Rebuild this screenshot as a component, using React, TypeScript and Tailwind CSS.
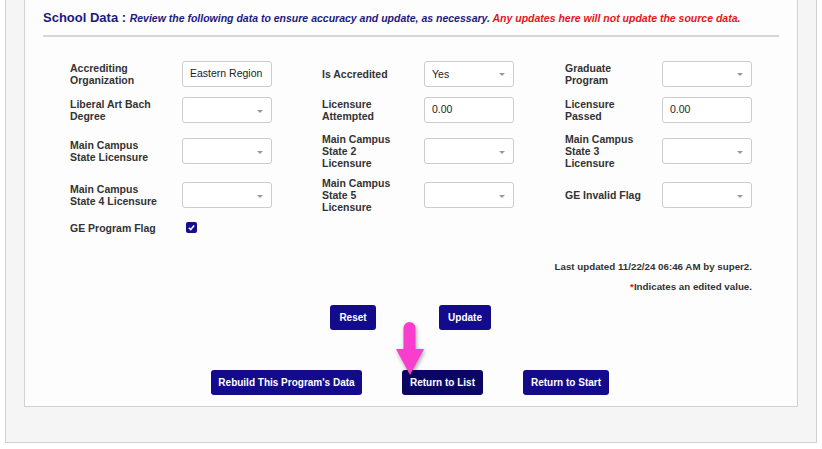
import React from "react";

type Field = {
  label: string;
  kind: "text" | "select" | "check" | "none";
  value?: string;
};

const rows: Field[][] = [
  [
    { label: "Accrediting\nOrganization", kind: "text", value: "Eastern Region" },
    { label: "Is Accredited", kind: "select", value: "Yes" },
    { label: "Graduate\nProgram", kind: "select" },
  ],
  [
    { label: "Liberal Art Bach\nDegree", kind: "select" },
    { label: "Licensure\nAttempted", kind: "text", value: "0.00" },
    { label: "Licensure\nPassed", kind: "text", value: "0.00" },
  ],
  [
    { label: "Main Campus\nState Licensure", kind: "select" },
    { label: "Main Campus\nState 2\nLicensure", kind: "select" },
    { label: "Main Campus\nState 3\nLicensure", kind: "select" },
  ],
  [
    { label: "Main Campus\nState 4 Licensure", kind: "select" },
    { label: "Main Campus\nState 5\nLicensure", kind: "select" },
    { label: "GE Invalid Flag", kind: "select" },
  ],
  [
    { label: "GE Program Flag", kind: "check" },
    { label: "", kind: "none" },
    { label: "", kind: "none" },
  ],
];

const Control: React.FC<{ field: Field }> = ({ field }) => {
  if (field.kind === "text") {
    return (
      <div className="w-[90px] h-[26px] border border-[#cccccc] rounded-[3px] bg-white flex items-center px-[7px] text-[10.5px] text-[#222] whitespace-nowrap overflow-hidden">
        {field.value}
      </div>
    );
  }
  if (field.kind === "select") {
    return (
      <div className="w-[90px] h-[26px] border border-[#cccccc] rounded-[3px] bg-white flex items-center justify-between pl-[7px] pr-[8px] text-[10.5px] text-[#222]">
        <span className="pt-[2px]">{field.value ?? ""}</span>
        <span className="w-0 h-0 border-l-[3px] border-r-[3px] border-t-[3px] border-l-transparent border-r-transparent border-t-[#999999] mt-[2px]"></span>
      </div>
    );
  }
  if (field.kind === "check") {
    return (
      <div className="ml-[4px] w-[11px] h-[11px] rounded-[2px] bg-[#160d8c] flex items-center justify-center">
        <svg width="9" height="9" viewBox="0 0 10 10">
          <path d="M2 5.2 L4.1 7.3 L8 2.8" fill="none" stroke="white" strokeWidth={1.6} />
        </svg>
      </div>
    );
  }
  return null;
};

const Btn: React.FC<{ w: string; dark?: boolean; children: React.ReactNode }> = ({ w, dark, children }) => (
  <button
    className={`${w} h-[25px] rounded-[3px] text-white text-[10px] font-bold flex items-center justify-center ${
      dark ? "bg-[#0b0663]" : "bg-[#130a8c]"
    }`}
  >
    {children}
  </button>
);

export default function App() {
  return (
    <div className="relative w-[822px] h-[449px] bg-white overflow-hidden font-['Liberation_Sans',Arial,sans-serif]">
      <div className="ml-[5px] w-[812px] border-x border-b border-[#d2d2d2] bg-[#f5f5f5] px-[18px] pb-[35px]">
        <div className="border-x border-b border-[#d2d2d2] bg-[#fdfdfe] px-[18px] pb-[11px]">
          {/* Heading */}
          <div className="pt-[10px] leading-[14px] whitespace-nowrap">
            <span className="text-[13px] font-bold text-[#1b1a7f]">School Data</span>
            <span className="text-[13px] font-bold text-[#1b1a7f]"> : </span>
            <span className="text-[10.5px] font-bold italic text-[#1b1a7f]">
              Review the following data to ensure accuracy and update, as necessary.{" "}
            </span>
            <span className="text-[10.5px] font-bold italic text-[#e8141c]">
              Any updates here will not update the source data.
            </span>
          </div>
          <div className="mt-[10px] h-[2px] bg-[#d6d6d6]"></div>

          {/* Form grid */}
          <div className="mt-[18px] w-[682px] mx-auto grid grid-cols-[112px_90px_50px_102px_90px_51px_97px_90px] grid-rows-[37px_36px_46px_42px_23px] items-center">
            {rows.map((row, ri) =>
              row.map((f, ci) => (
                <React.Fragment key={`${ri}-${ci}`}>
                  <div className="text-[10.5px] font-bold leading-[12px] text-[#333333] whitespace-pre-line">
                    {f.label}
                  </div>
                  <div>
                    <Control field={f} />
                  </div>
                  {ci < 2 && <div></div>}
                </React.Fragment>
              ))
            )}
          </div>

          {/* Footer notes */}
          <div className="w-[682px] mx-auto text-right text-[9.75px] font-bold text-[#333333] leading-[12px]">
            <div className="mt-[22px]">Last updated 11/22/24 06:46 AM by super2.</div>
            <div className="mt-[8px]">
              <span className="text-[#e8141c]">*</span>Indicates an edited value.
            </div>
          </div>

          {/* Actions */}
          <div className="mt-[12px] flex justify-center gap-[63px] pr-[1px]">
            <Btn w="w-[46px]">Reset</Btn>
            <Btn w="w-[52px]">Update</Btn>
          </div>
          <div className="mt-[40px] flex justify-center gap-[40px] pr-[2px]">
            <Btn w="w-[151px]">Rebuild This Program's Data</Btn>
            <Btn w="w-[81px]" dark>
              Return to List
            </Btn>
            <Btn w="w-[86px]">Return to Start</Btn>
          </div>
        </div>
      </div>

      {/* Pointer annotation */}
      <svg
        className="absolute left-[395px] top-[320px] drop-shadow-[1px_2px_2px_rgba(0,0,0,0.35)]"
        width="32"
        height="58"
        viewBox="0 0 32 58"
      >
        <path d="M8.5 30 L8.5 8 A6 6 0 0 1 20.5 8 L20.5 30 Z" fill="#f93dcd" />
        <path d="M1 29 L29 29 L15 55 Z" fill="#f93dcd" />
      </svg>
    </div>
  );
}
